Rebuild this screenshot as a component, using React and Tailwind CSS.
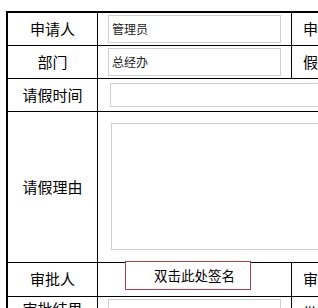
const font = { fontFamily: '"Noto Sans CJK SC", "Noto Sans", sans-serif' };

const Label = ({ children, className = "" }) => (
  <div className={`w-[90px] shrink-0 border-r border-black flex items-center justify-center text-[15px] text-black ${className}`}>
    {children}
  </div>
);

const SideLabel = ({ children }) => (
  <div className="w-[90px] shrink-0 border-r border-black flex items-center pl-[11px] text-[15px] text-black whitespace-nowrap">
    {children}
  </div>
);

const Field = ({ value }) => (
  <div className="w-[194px] shrink-0 border-r border-black flex items-center px-[10px]">
    <div className="w-[174px] h-[28px] border border-[#cfcfcf] bg-white flex items-center px-[3px] text-[12px] text-[#222]">
      {value}
    </div>
  </div>
);

export default function App() {
  return (
    <div className="w-[318px] h-[308px] overflow-hidden bg-white" style={font}>
      <div className="ml-[6px] mt-[11px] w-[600px] border-t-2 border-l-2 border-black">
        {/* 申请人 */}
        <div className="flex h-[33px] border-b border-black">
          <Label>申请人</Label>
          <Field value="管理员" />
          <SideLabel>申请日期</SideLabel>
        </div>

        {/* 部门 */}
        <div className="flex h-[33px] border-b border-black">
          <Label>部门</Label>
          <Field value="总经办" />
          <SideLabel>假期类型</SideLabel>
        </div>

        {/* 请假时间 */}
        <div className="flex h-[33px] border-b border-black">
          <Label>请假时间</Label>
          <div className="flex-1 flex items-center pl-[12px]">
            <div className="w-[400px] h-[24px] border border-[#cfcfcf] bg-white" />
          </div>
        </div>

        {/* 请假理由 */}
        <div className="flex h-[151px] border-b border-black">
          <Label>请假理由</Label>
          <div className="flex-1 pl-[13px] pt-[11px]">
            <div className="w-[400px] h-[127px] border border-[#cfcfcf] bg-white" />
          </div>
        </div>

        {/* 审批人 */}
        <div className="flex h-[34px] border-b border-black">
          <Label>审批人</Label>
          <div className="w-[194px] shrink-0 border-r border-black pl-[27px]">
            <div className="-mt-[2px] w-[126px] h-[29px] border border-[#b0404a] bg-white flex items-center pl-[28px] text-[13.5px] text-black whitespace-nowrap">
              双击此处签名
            </div>
          </div>
          <SideLabel>审批日期</SideLabel>
        </div>

        {/* 审批结果 */}
        <div className="flex h-[33px] border-b border-black">
          <Label className="items-start pt-[1px]">审批结果</Label>
          <Field value="" />
          <SideLabel>批示</SideLabel>
        </div>
      </div>
    </div>
  );
}
